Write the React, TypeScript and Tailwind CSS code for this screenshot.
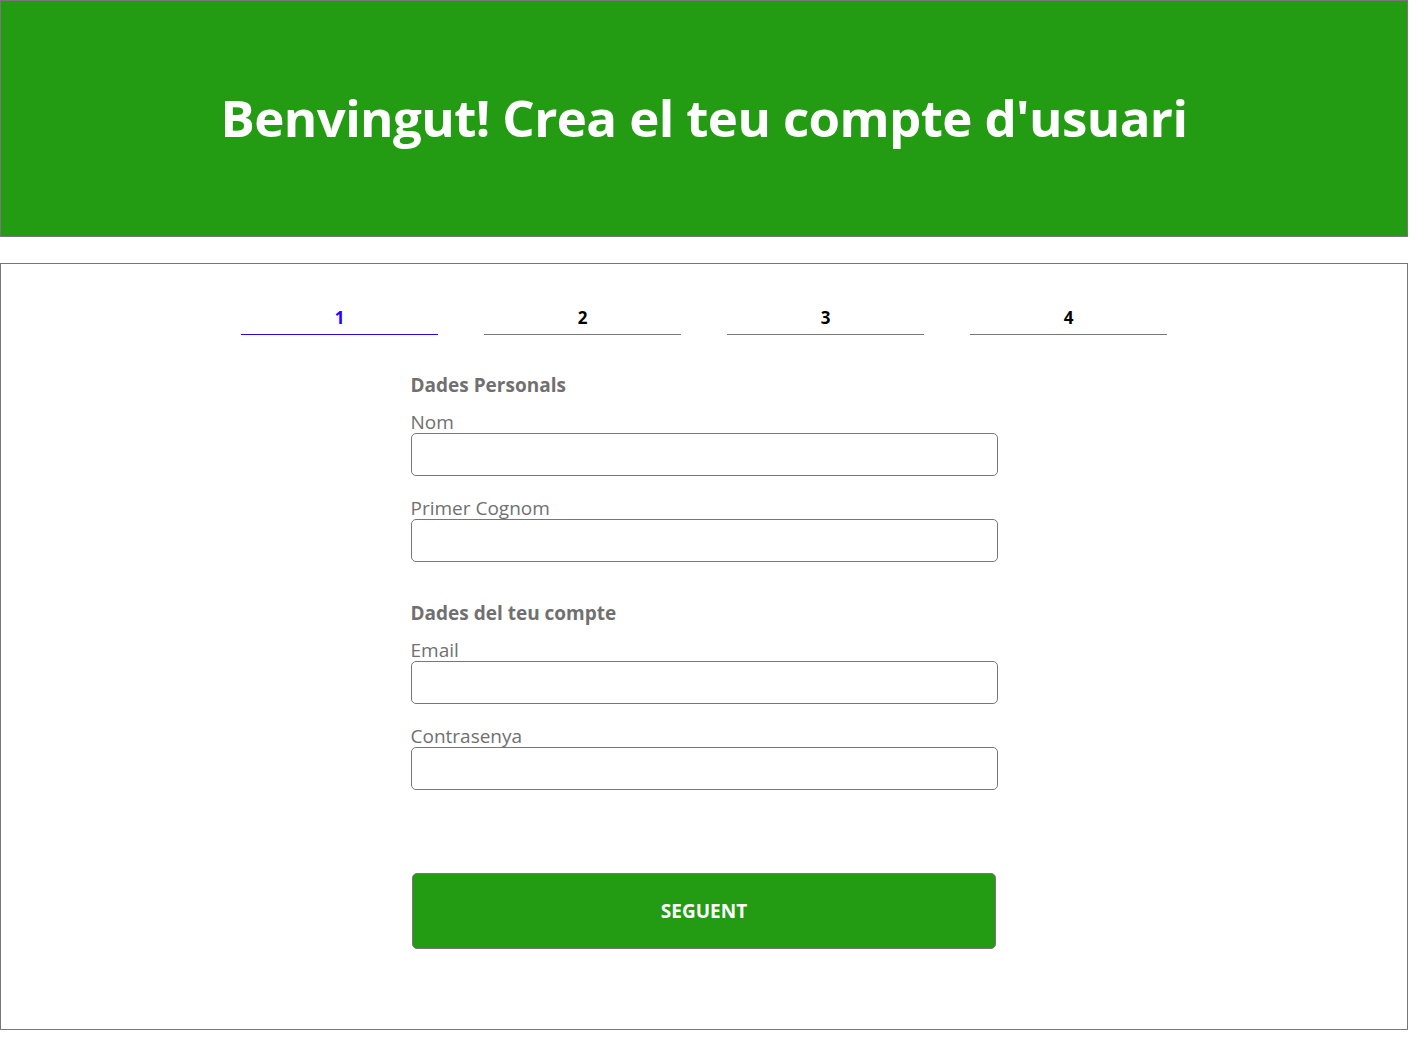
import React from 'react';

const font = { fontFamily: '"Open Sans", "Noto Sans", sans-serif' };

const steps = ['1', '2', '3', '4'];

const Field: React.FC<{ label: string; type?: string }> = ({ label, type = 'text' }) => (
  <div className="flex flex-col">
    <label className="text-[19px] leading-[22px] text-[#707070]">{label}</label>
    <input
      type={type}
      className="h-[43px] w-full rounded-[5px] border border-[#777] bg-white px-2 outline-none"
    />
  </div>
);

const App: React.FC = () => {
  return (
    <div className="w-[1408px] bg-white" style={font}>
      <header className="flex h-[237px] items-center justify-center border border-[#777] bg-[#239b12]">
        <h1 className="-mt-[2px] text-[51px] font-bold tracking-[-0.6px] text-white">
          Benvingut! Crea el teu compte d'usuari
        </h1>
      </header>

      <main className="mt-[26px] h-[767px] border border-[#777] pt-[42px]">
        <div className="mx-auto grid w-[926px] grid-cols-4 gap-[46px]">
          {steps.map((s, i) => (
            <div
              key={s}
              className={`border-b pb-[4px] text-center text-[17px] font-bold leading-[24px] ${
                i === 0 ? 'border-[#2a00ff] text-[#2a00ff]' : 'border-[#777] text-black'
              }`}
            >
              {s}
            </div>
          ))}
        </div>

        <form className="mx-auto mt-[38px] w-[587px]">
          <h2 className="text-[19px] font-bold leading-[24px] text-[#707070]">Dades Personals</h2>
          <div className="mt-[14px] flex flex-col gap-[21px]">
            <Field label="Nom" />
            <Field label="Primer Cognom" />
          </div>

          <h2 className="mt-[39px] text-[19px] font-bold leading-[24px] text-[#707070]">Dades del teu compte</h2>
          <div className="mt-[14px] flex flex-col gap-[21px]">
            <Field label="Email" type="email" />
            <Field label="Contrasenya" type="password" />
          </div>

          <button
            type="button"
            className="mx-auto mt-[83px] flex h-[76px] w-[584px] items-center justify-center rounded-[5px] border border-[#777] bg-[#239b12] text-[19px] font-bold text-white"
          >
            SEGUENT
          </button>
        </form>
      </main>
    </div>
  );
};

export default App;
